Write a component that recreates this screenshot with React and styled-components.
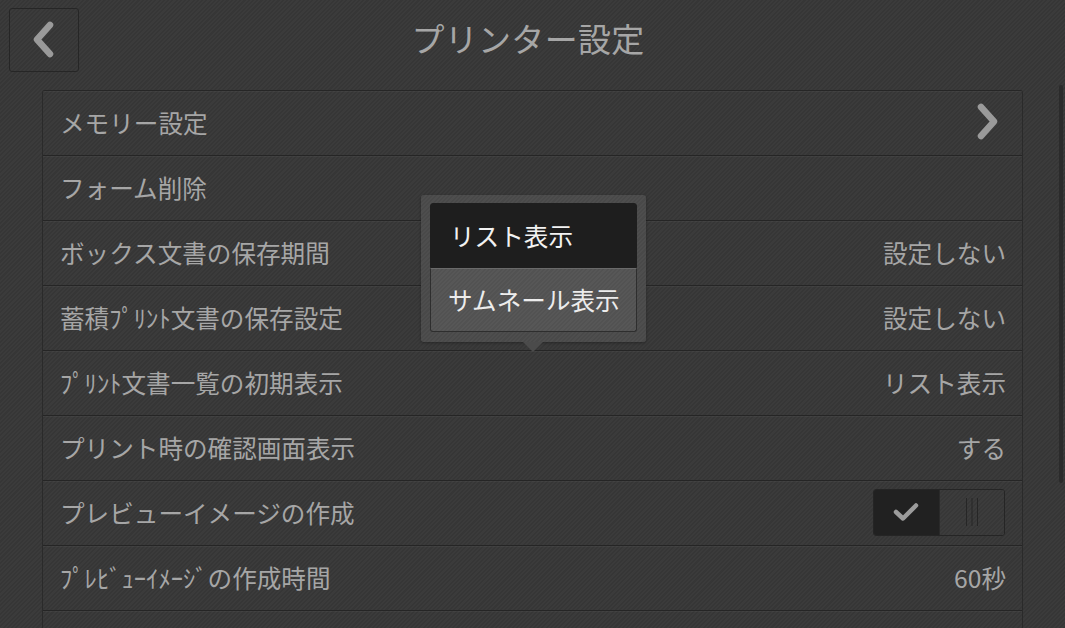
import React from "react";
import styled, { createGlobalStyle } from "styled-components";

const stripes = (base, dark) =>
  `repeating-linear-gradient(135deg, ${base} 0px, ${base} 1.5px, ${dark} 1.5px, ${dark} 3px)`;

const Global = createGlobalStyle`
  html, body { margin: 0; padding: 0; }
  body {
    background: #383838;
    font-family: "Noto Sans CJK JP", "Noto Sans", sans-serif;
  }
`;

const Page = styled.div`
  position: relative;
  width: 1065px;
  height: 628px;
  overflow: hidden;
  background: ${stripes("#3b3b3b", "#363636")};
`;

const Header = styled.header`
  display: grid;
  grid-template-columns: 1fr auto 1fr;
  align-items: center;
  height: 90px;
  box-sizing: border-box;
  padding: 8px 18px 18px 9px;
`;

const BackButton = styled.button`
  width: 70px;
  height: 64px;
  box-sizing: border-box;
  border: 1px solid #262626;
  border-radius: 3px;
  background: transparent;
  display: flex;
  align-items: center;
  justify-content: center;
  padding: 0;
  justify-self: start;
`;

const Title = styled.h1`
  margin: 0 0 4px 0;
  font-size: 33px;
  font-weight: 400;
  color: #a6a6a6;
  letter-spacing: 0.3px;
`;

const List = styled.div`
  margin: 0 42px;
  border-left: 1px solid #2a2a2a;
  border-right: 1px solid #2a2a2a;
  border-top: 1px solid #262626;
  border-radius: 3px 3px 0 0;
`;

const Row = styled.div`
  display: flex;
  align-items: center;
  justify-content: space-between;
  height: 65px;
  box-sizing: border-box;
  padding: 0 16px 2px 17px;
  border-bottom: 1px solid #252525;
  box-shadow: inset 0 1px 0 rgba(255, 255, 255, 0.04);
`;

const Label = styled.span`
  font-size: 24.6px;
  color: #a6a6a6;
  white-space: nowrap;
`;

const Value = styled.span`
  font-size: 24.6px;
  color: #a6a6a6;
  white-space: nowrap;
`;

const ChevronSlot = styled.span`
  display: flex;
  margin-right: 5px;
`;

const Toggle = styled.div`
  display: flex;
  width: 132px;
  height: 47px;
  box-sizing: border-box;
  border: 1px solid #252525;
  border-radius: 3px;
  overflow: hidden;
  margin-right: 1px;
`;

const ToggleHalf = styled.div`
  flex: 1;
  display: flex;
  align-items: center;
  justify-content: center;
  background: ${(p) => (p.$on ? "#212121" : stripes("#3c3c3c", "#373737"))};
  border-left: ${(p) => (p.$on ? "none" : "1px solid #2a2a2a")};
`;

const Popover = styled.div`
  position: absolute;
  left: 421px;
  top: 195px;
  width: 225px;
  box-sizing: border-box;
  padding: 8px 9px 10px 9px;
  border-radius: 3px;
  background: ${stripes("#4e4e4e", "#494949")};
  box-shadow: 0 1px 3px rgba(0, 0, 0, 0.3);
  &::after {
    content: "";
    position: absolute;
    left: 102px;
    bottom: -10px;
    border-left: 10px solid transparent;
    border-right: 10px solid transparent;
    border-top: 10px solid #4b4b4b;
  }
`;

const PopItem = styled.div`
  height: ${(p) => (p.$selected ? 65 : 64)}px;
  box-sizing: border-box;
  display: flex;
  align-items: center;
  padding-left: ${(p) => (p.$selected ? 19 : 17)}px;
  padding-bottom: 2px;
  font-size: 24.6px;
  color: ${(p) => (p.$selected ? "#f2f2f2" : "#ececec")};
  background: ${(p) => (p.$selected ? "#1e1e1e" : stripes("#575757", "#525252"))};
  border: 1px solid ${(p) => (p.$selected ? "#1e1e1e" : "#2e2e2e")};
  border-radius: ${(p) => (p.$selected ? "3px 3px 0 0" : "0 0 3px 3px")};
  border-top: ${(p) => (p.$selected ? "1px solid #1e1e1e" : "1px solid #6a6a6a")};
`;

const ScrollBar = styled.div`
  position: absolute;
  right: 2px;
  top: 85px;
  width: 4px;
  height: 398px;
  border-radius: 2px;
  background: #2b2b2b;
`;

const Chevron = ({ dir }) => (
  <svg width="28" height="42" viewBox="0 0 28 42">
    <path
      d={dir === "left" ? "M20 6 L7 20.5 L20 35" : "M8 6 L21 20.5 L8 35"}
      fill="none"
      stroke="#9a9a9a"
      strokeWidth="6.5"
      strokeLinecap="round"
      strokeLinejoin="round"
    />
  </svg>
);

const Check = () => (
  <svg width="26" height="20" viewBox="0 0 26 20">
    <path
      d="M3 10 L10 16.5 L23 3.5"
      fill="none"
      stroke="#9c9c9c"
      strokeWidth="4.5"
      strokeLinecap="round"
      strokeLinejoin="round"
    />
  </svg>
);

const Grip = () => (
  <svg width="14" height="28" viewBox="0 0 14 28">
    <path d="M1.5 0 V28 M7 0 V28 M12.5 0 V28" stroke="#262626" strokeWidth="1" />
  </svg>
);

const rows = [
  { label: "メモリー設定", chevron: true },
  { label: "フォーム削除" },
  { label: "ボックス文書の保存期間", value: "設定しない" },
  { label: "蓄積ﾌﾟﾘﾝﾄ文書の保存設定", value: "設定しない" },
  { label: "ﾌﾟﾘﾝﾄ文書一覧の初期表示", value: "リスト表示" },
  { label: "プリント時の確認画面表示", value: "する" },
  { label: "プレビューイメージの作成", toggle: true },
  { label: "ﾌﾟﾚﾋﾞｭｰｲﾒｰｼﾞの作成時間", value: "60秒" },
  { label: "" },
];

export default function App() {
  return (
    <Page>
      <Global />
      <Header>
        <BackButton aria-label="戻る">
          <Chevron dir="left" />
        </BackButton>
        <Title>プリンター設定</Title>
        <span />
      </Header>
      <List>
        {rows.map((r, i) => (
          <Row key={i}>
            <Label>{r.label}</Label>
            {r.value && <Value>{r.value}</Value>}
            {r.chevron && (
              <ChevronSlot>
                <Chevron dir="right" />
              </ChevronSlot>
            )}
            {r.toggle && (
              <Toggle>
                <ToggleHalf $on>
                  <Check />
                </ToggleHalf>
                <ToggleHalf>
                  <Grip />
                </ToggleHalf>
              </Toggle>
            )}
          </Row>
        ))}
      </List>
      <Popover>
        <PopItem $selected>リスト表示</PopItem>
        <PopItem>サムネール表示</PopItem>
      </Popover>
      <ScrollBar />
    </Page>
  );
}
